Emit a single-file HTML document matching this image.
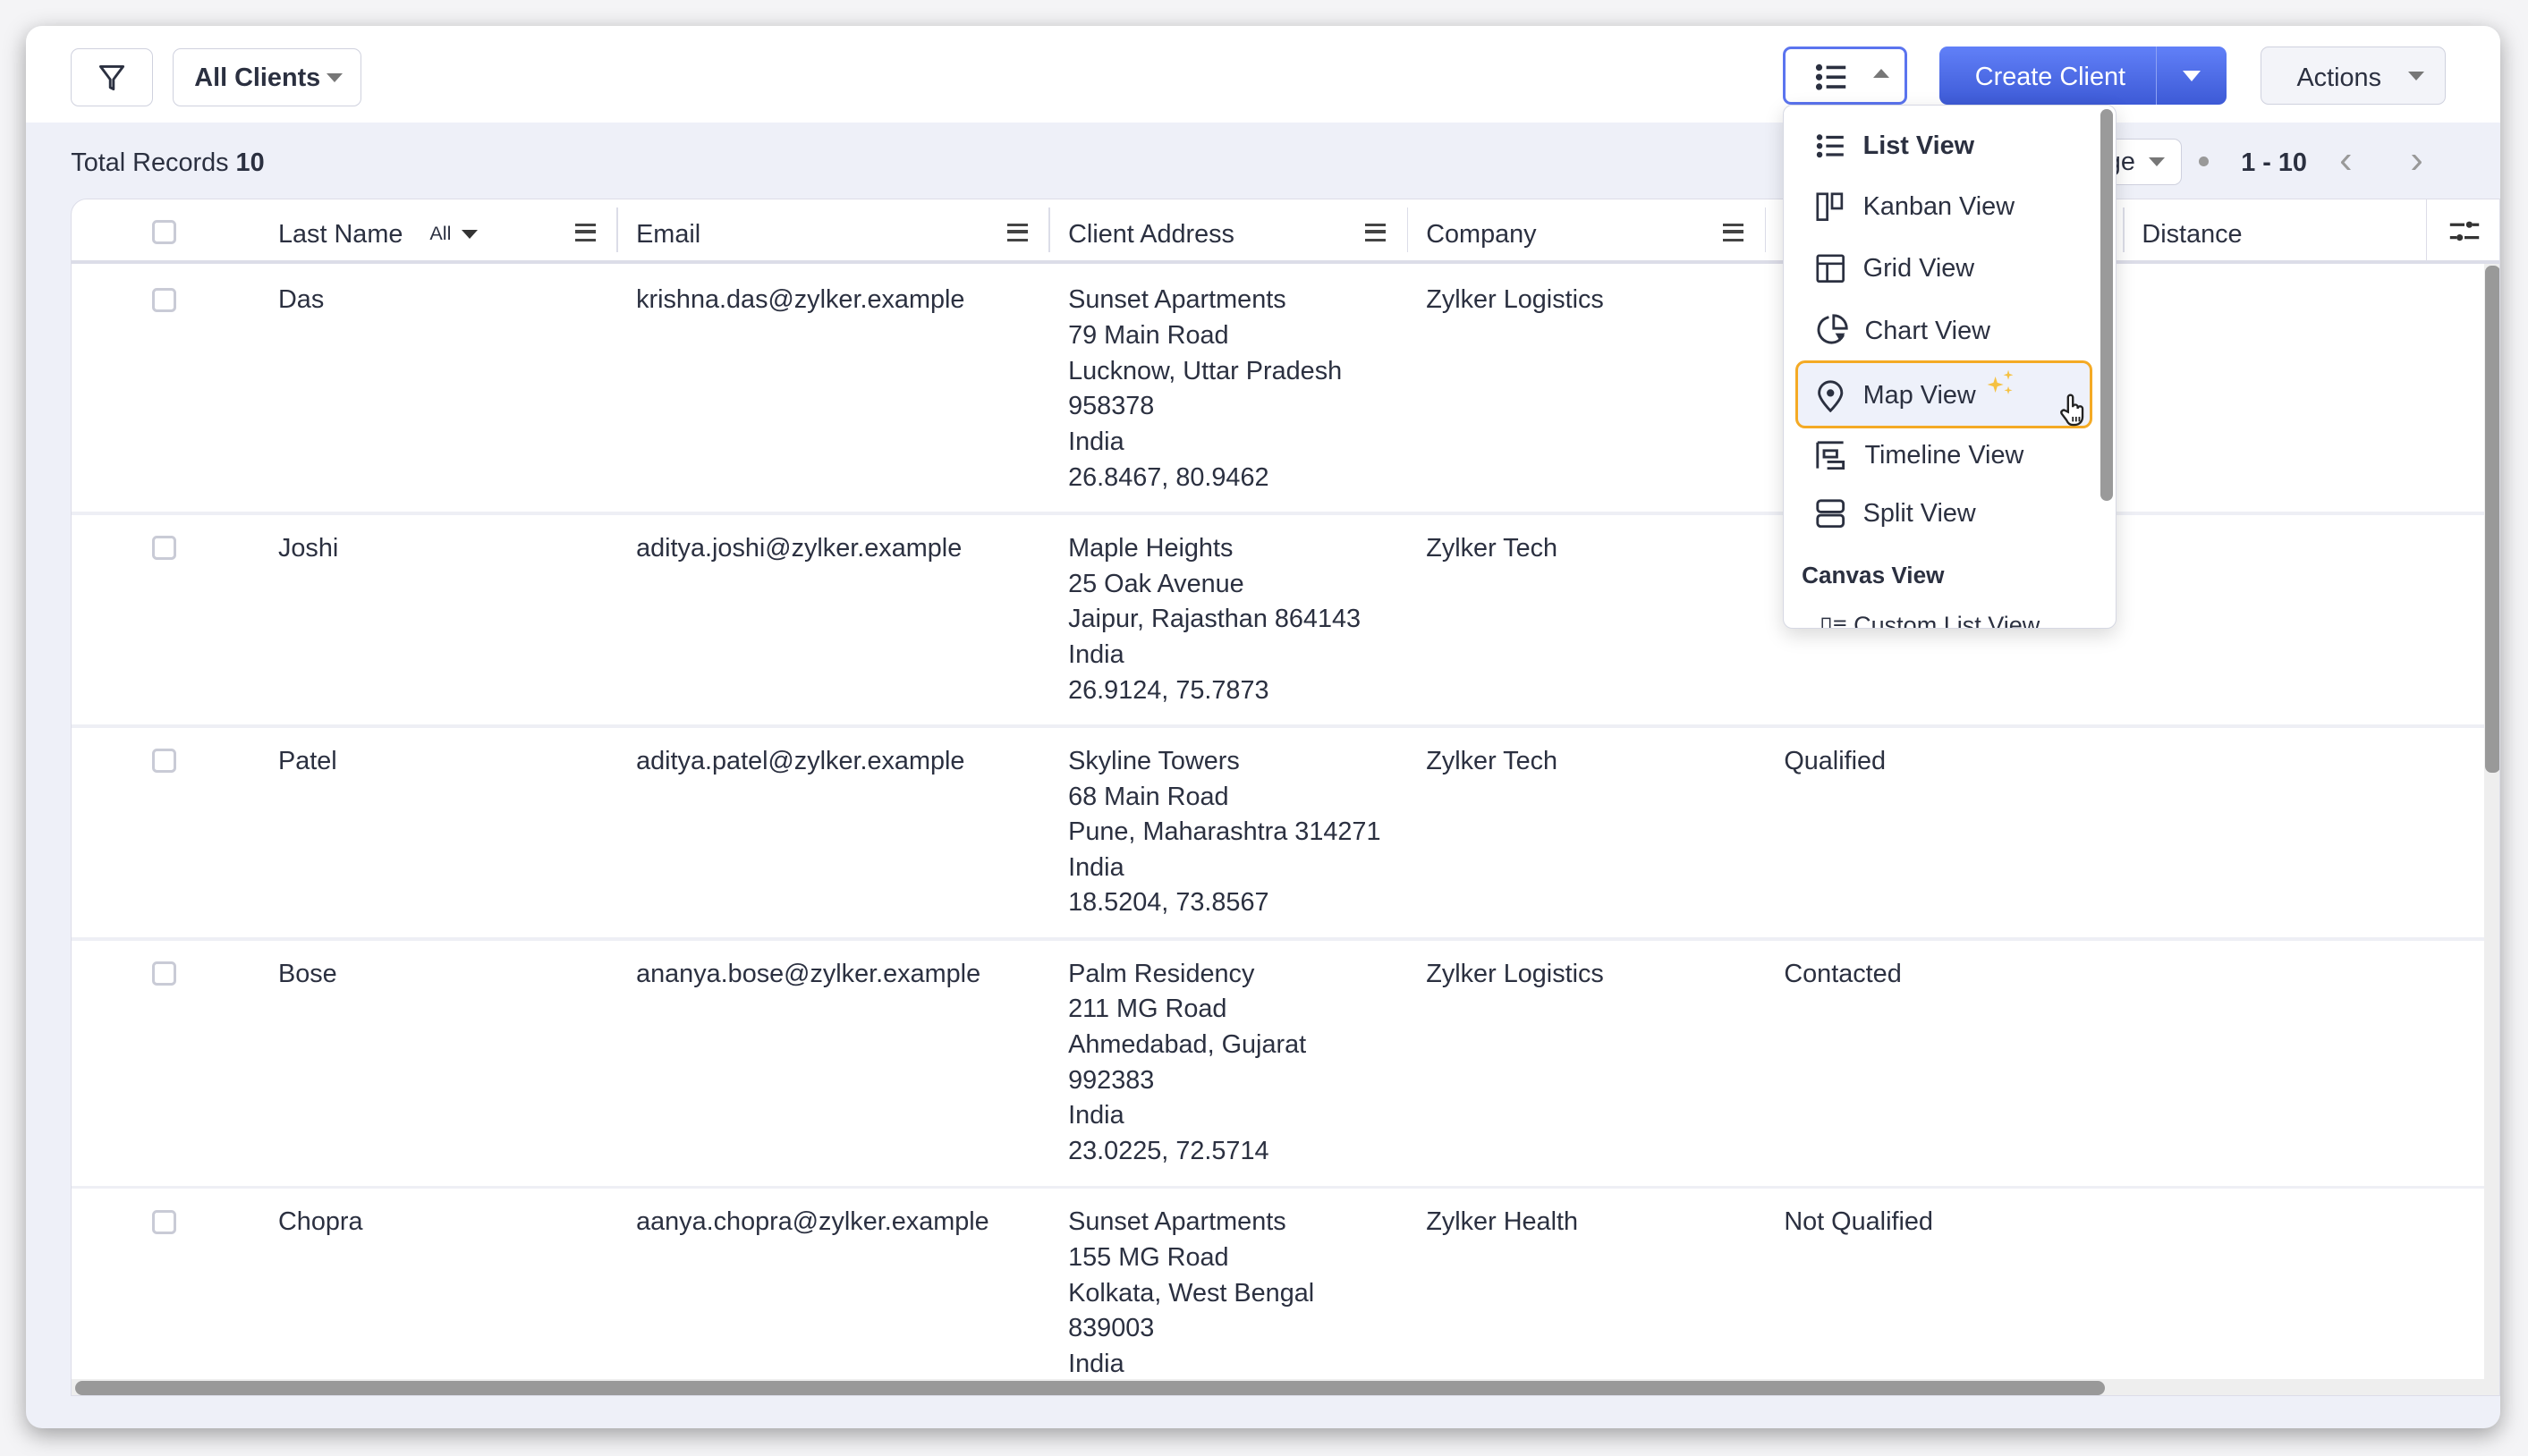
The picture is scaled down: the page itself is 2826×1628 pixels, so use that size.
<!DOCTYPE html>
<html><head><meta charset="utf-8"><style>
*{box-sizing:border-box;margin:0;padding:0}
html,body{width:2826px;height:1628px;overflow:hidden;background:#f4f4f6}
#w{zoom:1.8023;width:1568px;height:903px;position:relative;font-family:"Liberation Sans",Arial,sans-serif;color:#2b3040;font-size:16px}
.a{position:absolute;white-space:nowrap}
.win{left:16px;top:16px;width:1535px;height:870px;background:#eef0f8;border-radius:10px;box-shadow:0 4px 14px rgba(0,0,0,.35);overflow:hidden}
.top{left:0;top:0;width:1535px;height:60px;background:#fff}
.btn{border:1px solid #cfd1de;border-radius:5px;background:#fff}
.card{left:28px;top:107px;width:1507px;height:743px;background:#fff;border:1px solid #dcdde8;border-radius:10px 0 0 0;overflow:hidden}
.cb{width:15px;height:15px;border:2px solid #c9cbd6;border-radius:3px}
.sep{width:1px;height:28px;background:#dcdde8}
.ham{width:13px;height:11px;border-top:2px solid #444;border-bottom:2px solid #444}
.ham:after{content:"";position:absolute;left:0;top:2.5px;width:13px;height:2px;background:#444}
.tri{width:0;height:0;border-left:5px solid transparent;border-right:5px solid transparent;border-top:6px solid #777}
.cell{line-height:22px;margin-top:1px}
.rl{height:2px;background:#eeeff5;left:0;width:1507px}
.dd{left:1106px;top:65px;width:207px;height:325px;background:#fff;border:1px solid #d6d8e3;border-radius:6px;box-shadow:0 4px 12px rgba(0,0,0,.15);overflow:hidden}
.it{left:49px;font-size:16px}
svg{position:absolute}
</style></head><body><div id="w">
<div class="a win">
 <div class="a top"></div>
 <div class="a btn" style="left:28px;top:14px;width:51px;height:36px"><svg width="20" height="20" viewBox="0 0 20 20" style="left:15px;top:8px"><path d="M3 3h14l-6 8v6l-2 -1v-5z" fill="none" stroke="#2b3040" stroke-width="1.6" stroke-linejoin="round"/></svg></div>
 <div class="a btn" style="left:91px;top:14px;width:117px;height:36px"><span class="a" style="left:13px;top:9px;font-weight:bold;font-size:16px">All Clients</span><div class="a tri" style="left:95px;top:15px"></div></div>
 <div class="a btn" style="left:1090px;top:13px;width:77px;height:36px;border:2px solid #5b74ef"><svg width="20" height="18" viewBox="0 0 20 18" style="left:18px;top:8px"><g fill="#2b3040"><circle cx="2.5" cy="3" r="2"/><circle cx="2.5" cy="9" r="2"/><circle cx="2.5" cy="15" r="2"/><rect x="7" y="2" width="12" height="2"/><rect x="7" y="8" width="12" height="2"/><rect x="7" y="14" width="12" height="2"/></g></svg><div class="a" style="left:54px;top:12px;border-left:5px solid transparent;border-right:5px solid transparent;border-bottom:6px solid #777"></div></div>
 <div class="a" style="left:1187px;top:13px;width:178px;height:36px;border-radius:5px;background:linear-gradient(#6180f8,#3d5ad6);"><span class="a" style="left:22px;top:10px;color:#fff;font-size:16px">Create Client</span><div class="a" style="left:134px;top:0;width:1px;height:36px;background:#8ea2f3"></div><div class="a" style="left:151px;top:15px;border-left:6px solid transparent;border-right:6px solid transparent;border-top:7px solid #fff"></div></div>
 <div class="a btn" style="left:1386px;top:13px;width:115px;height:36px;background:#f3f4f9"><span class="a" style="left:22px;top:10px">Actions</span><div class="a tri" style="left:91px;top:15px"></div></div>
 <div class="a" style="left:28px;top:76px">Total Records <b>10</b></div>
 <div class="a btn" style="left:1230px;top:70px;width:107px;height:29px"><span class="a" style="left:60px;top:5px">ge</span><div class="a tri" style="left:86px;top:11px"></div></div>
 <div class="a" style="left:1348px;top:81px;width:6px;height:6px;border-radius:3px;background:#999"></div>
 <div class="a" style="left:1374px;top:76px;font-weight:bold">1 - 10</div>
 <div class="a" style="left:1435px;top:70px;color:#999;font-size:24px;font-weight:100">‹</div>
 <div class="a" style="left:1479px;top:70px;color:#999;font-size:24px;font-weight:100">›</div>
 <div class="a card">
  <div class="a" style="left:0;top:38px;width:1507px;height:2px;background:#dcdde8"></div>
  <div class="a cb" style="left:50px;top:13px"></div>
  <span class="a" style="left:128px;top:13px">Last Name</span><span class="a" style="left:222px;top:14px;font-size:12px">All</span><div class="a tri" style="left:242px;top:19px;border-top-color:#333"></div>
  <div class="a ham" style="left:312px;top:15px"></div><div class="a sep" style="left:338px;top:5px"></div>
  <span class="a" style="left:350px;top:13px">Email</span><div class="a ham" style="left:580px;top:15px"></div><div class="a sep" style="left:606px;top:5px"></div>
  <span class="a" style="left:618px;top:13px">Client Address</span><div class="a ham" style="left:802px;top:15px"></div><div class="a sep" style="left:828px;top:5px"></div>
  <span class="a" style="left:840px;top:13px">Company</span><div class="a ham" style="left:1024px;top:15px"></div><div class="a sep" style="left:1050px;top:5px"></div>
  <div class="a sep" style="left:1272px;top:5px"></div><span class="a" style="left:1284px;top:13px">Distance</span><div class="a sep" style="left:1460px;top:0;height:38px"></div>
  <svg width="20" height="16" viewBox="0 0 20 16" style="left:1474px;top:12px"><g stroke="#333" stroke-width="1.8"><path d="M1 4h9M15 4h4M1 12h4M10 12h9"/></g><circle cx="13" cy="4" r="2" fill="#333"/><circle cx="7" cy="12" r="2" fill="#333"/></svg>

  <div class="a cb" style="left:50px;top:55px"></div><span class="a cell" style="left:128px;top:51px">Das</span><span class="a cell" style="left:350px;top:51px">krishna.das@zylker.example</span><span class="a cell" style="left:618px;top:51px">Sunset Apartments<br>79 Main Road<br>Lucknow, Uttar Pradesh<br>958378<br>India<br>26.8467, 80.9462</span><span class="a cell" style="left:840px;top:51px">Zylker Logistics</span>
  <div class="a rl" style="top:194px"></div>
  <div class="a cb" style="left:50px;top:209px"></div><span class="a cell" style="left:128px;top:205px">Joshi</span><span class="a cell" style="left:350px;top:205px">aditya.joshi@zylker.example</span><span class="a cell" style="left:618px;top:205px">Maple Heights<br>25 Oak Avenue<br>Jaipur, Rajasthan 864143<br>India<br>26.9124, 75.7873</span><span class="a cell" style="left:840px;top:205px">Zylker Tech</span>
  <div class="a rl" style="top:326px"></div>
  <div class="a cb" style="left:50px;top:341px"></div><span class="a cell" style="left:128px;top:337px">Patel</span><span class="a cell" style="left:350px;top:337px">aditya.patel@zylker.example</span><span class="a cell" style="left:618px;top:337px">Skyline Towers<br>68 Main Road<br>Pune, Maharashtra 314271<br>India<br>18.5204, 73.8567</span><span class="a cell" style="left:840px;top:337px">Zylker Tech</span><span class="a cell" style="left:1062px;top:337px">Qualified</span>
  <div class="a rl" style="top:458px"></div>
  <div class="a cb" style="left:50px;top:473px"></div><span class="a cell" style="left:128px;top:469px">Bose</span><span class="a cell" style="left:350px;top:469px">ananya.bose@zylker.example</span><span class="a cell" style="left:618px;top:469px">Palm Residency<br>211 MG Road<br>Ahmedabad, Gujarat<br>992383<br>India<br>23.0225, 72.5714</span><span class="a cell" style="left:840px;top:469px">Zylker Logistics</span><span class="a cell" style="left:1062px;top:469px">Contacted</span>
  <div class="a rl" style="top:612px"></div>
  <div class="a cb" style="left:50px;top:627px"></div><span class="a cell" style="left:128px;top:623px">Chopra</span><span class="a cell" style="left:350px;top:623px">aanya.chopra@zylker.example</span><span class="a cell" style="left:618px;top:623px">Sunset Apartments<br>155 MG Road<br>Kolkata, West Bengal<br>839003<br>India</span><span class="a cell" style="left:840px;top:623px">Zylker Health</span><span class="a cell" style="left:1062px;top:623px">Not Qualified</span>
  <div class="a" style="left:0;top:732px;width:1507px;height:11px;background:#eee"></div>
  <div class="a" style="left:2px;top:733px;width:1259px;height:9px;border-radius:5px;background:#999"></div>
  <div class="a" style="left:1496px;top:40px;width:11px;height:692px;background:#eee"></div>
  <div class="a" style="left:1497px;top:41px;width:9px;height:315px;border-radius:4px;background:#999"></div>
 </div>
</div>
<div class="a dd">
 <div class="a" style="left:196px;top:2px;width:8px;height:243px;border-radius:4px;background:#9a9a9a"></div>
 <svg width="18" height="18" viewBox="0 0 20 18" style="left:20px;top:16px"><g fill="#2b3040"><circle cx="2.5" cy="3" r="2"/><circle cx="2.5" cy="9" r="2"/><circle cx="2.5" cy="15" r="2"/><rect x="7" y="2" width="12" height="2"/><rect x="7" y="8" width="12" height="2"/><rect x="7" y="14" width="12" height="2"/></g></svg>
 <span class="a it" style="top:16px;font-weight:bold">List View</span>
 <svg width="18" height="18" viewBox="0 0 18 18" style="left:20px;top:54px"><g fill="none" stroke="#2b3040" stroke-width="1.5"><rect x="1" y="1" width="6" height="16"/><rect x="10" y="1" width="6" height="9"/></g></svg>
 <span class="a it" style="top:54px">Kanban View</span>
 <svg width="18" height="18" viewBox="0 0 18 18" style="left:20px;top:92px"><g fill="none" stroke="#2b3040" stroke-width="1.5"><rect x="1" y="1" width="16" height="16" rx="1"/><path d="M1 6h16M7 6v11"/></g></svg>
 <span class="a it" style="top:92px">Grid View</span>
 <svg width="20" height="20" viewBox="0 0 20 20" style="left:20px;top:129px"><g fill="none" stroke="#2b3040" stroke-width="1.6"><path d="M8 2a8 8 0 1 0 9 11"/><path d="M11 1v8h8a8 8 0 0 0 -8 -8z"/></g><path d="M12 12h6l-3 5z" fill="#2b3040"/></svg>
 <span class="a it" style="top:131px;left:50px">Chart View</span>
 <div class="a" style="left:7px;top:158px;width:184px;height:42px;border:2px solid #f4aa25;border-radius:6px;background:#eef1fa"></div>
 <svg width="18" height="20" viewBox="0 0 18 20" style="left:20px;top:170px"><path d="M9 19s7-7 7-11a7 7 0 0 0 -14 0c0 4 7 11 7 11z" fill="none" stroke="#2b3040" stroke-width="1.6"/><circle cx="9" cy="8" r="2.3" fill="#2b3040"/></svg>
 <span class="a it" style="top:171px">Map View</span>
 <svg width="20" height="20" viewBox="0 0 20 20" style="left:124px;top:163px"><path d="M7 5l1.2 3.8L12 10l-3.8 1.2L7 15l-1.2-3.8L2 10l3.8-1.2z" fill="#f5c142"/><path d="M15 1l.7 2.3L18 4l-2.3.7L15 7l-.7-2.3L12 4l2.3-.7z" fill="#f5c142"/><path d="M15 11l.6 2L17.5 13.5l-1.9.6L15 16l-.6-1.9-1.9-.6 1.9-.5z" fill="#f5c142"/></svg>
 <svg width="18" height="22" viewBox="0 0 18 22" style="left:170px;top:178px"><path d="M6 12V3a1.5 1.5 0 0 1 3 0v6a1.5 1.5 0 0 1 3 0v1a1.5 1.5 0 0 1 3 0v5c0 3-2 5-5 5H9c-2 0-3-1-4-3l-3-4a1.5 1.5 0 0 1 2.3-1.8z" fill="#fff" stroke="#222" stroke-width="1.3"/><path d="M9 15v3M11 15v3M13 15v3" stroke="#222" stroke-width="1"/></svg>
 <svg width="18" height="18" viewBox="0 0 18 18" style="left:20px;top:208px"><g fill="none" stroke="#2b3040" stroke-width="1.6"><path d="M1 1v16M1 1h16M5 6h8v4H5zM7 13h10v4H7"/></g></svg>
 <span class="a it" style="top:208px;left:50px">Timeline View</span>
 <svg width="18" height="18" viewBox="0 0 18 18" style="left:20px;top:244px"><g fill="none" stroke="#2b3040" stroke-width="1.6"><rect x="1" y="1" width="16" height="7" rx="2"/><rect x="1" y="10" width="16" height="7" rx="2"/></g></svg>
 <span class="a it" style="top:244px">Split View</span>
 <span class="a" style="left:11px;top:283px;font-weight:bold;font-size:14.5px">Canvas View</span>
 <span class="a" style="left:22px;top:314px;font-size:15px;color:#2b3040">▯≡ Custom List View</span>
</div>
</div></body></html>
